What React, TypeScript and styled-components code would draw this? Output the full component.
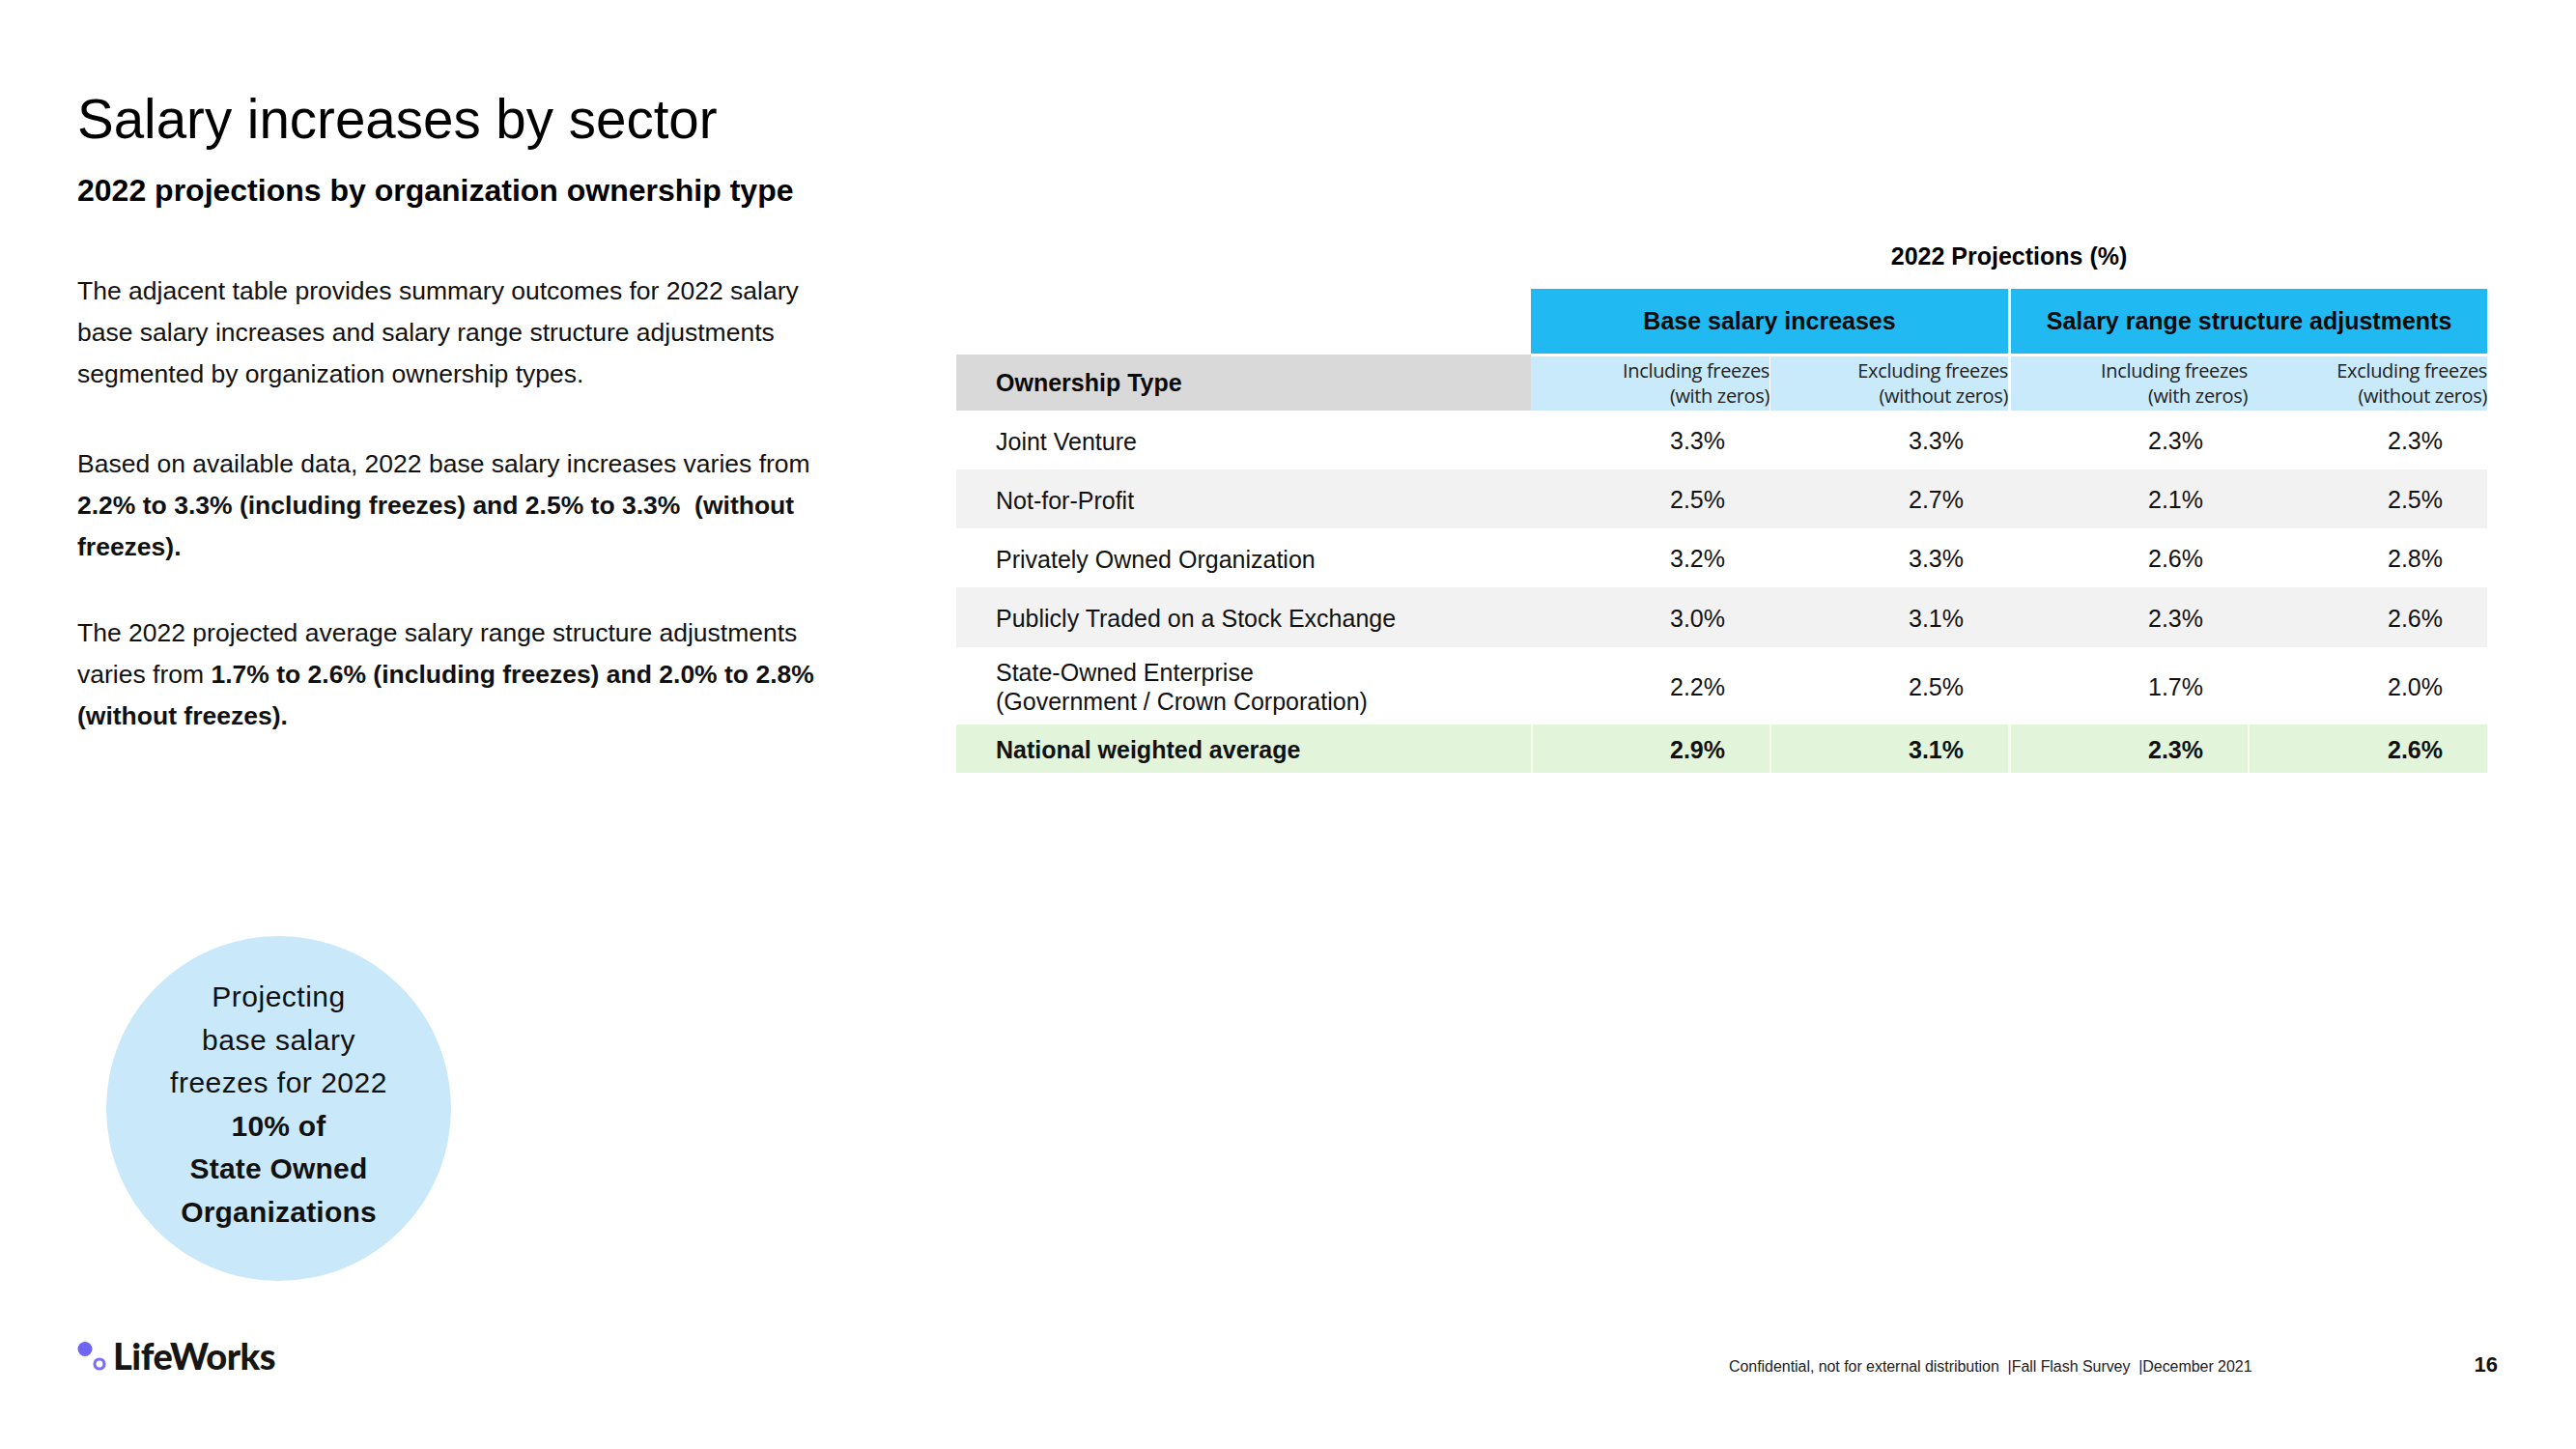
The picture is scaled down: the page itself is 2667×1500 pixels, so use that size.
import React from "react";
import styled, { createGlobalStyle } from "styled-components";

const GlobalStyle = createGlobalStyle`
  html, body {
    margin: 0;
    padding: 0;
    background: #ffffff;
  }
  body {
    font-family: "Liberation Sans", Arial, sans-serif;
    color: #000000;
  }
`;

type Tone = "white" | "stripe" | "total";

interface RowData {
  label: string[];
  values: string[];
  tone: Tone;
}

const rows: RowData[] = [
  {label: ["Joint Venture"], values: ["3.3%", "3.3%", "2.3%", "2.3%"], tone: "white"},
  {label: ["Not-for-Profit"], values: ["2.5%", "2.7%", "2.1%", "2.5%"], tone: "stripe"},
  {label: ["Privately Owned Organization"], values: ["3.2%", "3.3%", "2.6%", "2.8%"], tone: "white"},
  {label: ["Publicly Traded on a Stock Exchange"], values: ["3.0%", "3.1%", "2.3%", "2.6%"], tone: "stripe"},
  {
    label: ["State-Owned Enterprise", "(Government / Crown Corporation)"],
    values: ["2.2%", "2.5%", "1.7%", "2.0%"],
    tone: "white"
  },
  {label: ["National weighted average"], values: ["2.9%", "3.1%", "2.3%", "2.6%"], tone: "total"},
];

const subHeaders = [
  ["Including freezes", "(with zeros)"],
  ["Excluding freezes", "(without zeros)"],
  ["Including freezes", "(with zeros)"],
  ["Excluding freezes", "(without zeros)"],
];

const toneColor: Record<Tone, string> = {
  white: "#ffffff",
  stripe: "#f2f2f2",
  total: "#e2f4da",
};

const Slide = styled.div`
  width: 2667px;
  height: 1500px;
  box-sizing: border-box;
  padding: 90px 81px 74px 80px;
  display: flex;
  flex-direction: column;
  background: #ffffff;
  overflow: hidden;
`;

const Title = styled.h1`
  margin: 0;
  font-size: 56.5px;
  line-height: 67px;
  font-weight: 400;
  color: #000;
`;

const Subtitle = styled.h2`
  margin: 20px 0 0;
  font-size: 32px;
  line-height: 40px;
  font-weight: 700;
  color: #000;
`;

const Content = styled.div`
  display: grid;
  grid-template-columns: 910px 1585px;
  align-items: start;
`;

const TextColumn = styled.div`
  padding-top: 63px;
  display: flex;
  flex-direction: column;
  align-items: flex-start;
`;

const Paragraph = styled.p<{ $after?: number }>`
  margin: 0 0 ${p => p.$after ?? 0}px;
  font-size: 26.5px;
  line-height: 43px;
  color: #111;

  b {
    font-weight: 700;
  }
`;

const Bubble = styled.div`
  margin: 206px 0 0 30px;
  width: 357px;
  height: 357px;
  box-sizing: border-box;
  padding-bottom: 8px;
  border-radius: 50%;
  background: #c9e9fa;
  display: flex;
  flex-direction: column;
  align-items: center;
  justify-content: center;
  text-align: center;
  font-size: 30px;
  line-height: 44.5px;
  color: #111;
`;

const BubbleLine = styled.span<{ $bold?: boolean }>`
  font-weight: ${p => (p.$bold ? 700 : 400)};
  letter-spacing: ${p => (p.$bold ? "0.2px" : "0.5px")};
`;

const Table = styled.div`
  margin-top: 25px;
  display: grid;
  grid-template-columns: 595px 247px 247px 248px 248px;
  grid-template-rows: 57px 68px 58px 61px 61px 61px 62px 80px 50px;
`;

const Caption = styled.div`
  grid-column: 2 / 6;
  display: flex;
  align-items: flex-end;
  justify-content: center;
  padding-bottom: 19px;
  font-size: 25px;
  line-height: 30px;
  font-weight: 700;
`;

const Spacer = styled.div`
  grid-column: 1;
  grid-row: 2;
`;

const GroupHeader = styled.div<{ $second?: boolean }>`
  grid-column: ${p => (p.$second ? "4 / 6" : "2 / 4")};
  background: #21b9f1;
  border-left: ${p => (p.$second ? "3px solid #ffffff" : "none")};
  display: flex;
  align-items: center;
  justify-content: center;
  font-size: 25px;
  font-weight: 700;
  color: #0a0a0a;
  margin-bottom: 1px;
`;

const OwnerHead = styled.div`
  grid-column: 1;
  background: #d9d9d9;
  display: flex;
  align-items: center;
  padding-left: 41px;
  font-size: 25px;
  font-weight: 700;
  color: #0a0a0a;
`;

const SubHead = styled.div<{ $gap: number }>`
  background: #c8eafb;
  border-top: 2px solid #ffffff;
  border-left: ${p => (p.$gap ? `${p.$gap}px solid #ffffff` : "none")};
  display: flex;
  flex-direction: column;
  justify-content: center;
  align-items: flex-end;
  font-family: "Open Sans", "Noto Sans", sans-serif;
  font-size: 20px;
  line-height: 26px;
  letter-spacing: -0.35px;
  color: #222;
  white-space: nowrap;
`;

const LabelCell = styled.div<{ $tone: Tone }>`
  background: ${p => toneColor[p.$tone]};
  display: flex;
  flex-direction: column;
  justify-content: center;
  padding: 2px 0 0 41px;
  font-size: 25px;
  line-height: 30px;
  font-weight: ${p => (p.$tone === "total" ? 700 : 400)};
  color: #111;
`;

const ValueCell = styled.div<{ $tone: Tone; $gap: number }>`
  background: ${p => toneColor[p.$tone]};
  border-left: ${p =>
    p.$tone === "total"
      ? `${Math.max(p.$gap, 2)}px solid #f4fbf1`
      : p.$gap > 1
        ? `${p.$gap}px solid ${p.$tone === "stripe" ? "#f2f2f2" : "#ffffff"}`
        : "none"};
  display: flex;
  align-items: center;
  justify-content: flex-end;
  padding: 2px 46px 0 0;
  font-size: 25px;
  font-weight: ${p => (p.$tone === "total" ? 700 : 400)};
  color: #111;
`;

const Footer = styled.div`
  margin-top: auto;
  display: flex;
  align-items: baseline;
`;

const Logo = styled.div`
  display: flex;
  align-items: flex-end;
  gap: 7px;

  svg {
    margin-bottom: 6px;
    flex: none;
  }
`;

const LogoWord = styled.span`
  font-family: Lato, "Inter", sans-serif;
  font-weight: 900;
  font-size: 38px;
  line-height: 45px;
  letter-spacing: -0.5px;
  color: #161616;
`;

const Note = styled.span`
  margin-left: auto;
  font-size: 16px;
  letter-spacing: -0.05px;
  color: #222;
  white-space: pre;
`;

const PageNumber = styled.span`
  margin-left: 230px;
  font-size: 22px;
  font-weight: 700;
  color: #111;
`;

const colGap = [0, 1, 3, 0];

const App: React.FC = () => {
  return (
    <>
      <GlobalStyle/>
      <Slide>
        <Title>Salary increases by sector</Title>
        <Subtitle>2022 projections by organization ownership type</Subtitle>
        <Content>
          <TextColumn>
            <Paragraph $after={50}>
              The adjacent table provides summary outcomes for 2022 salary<br/>
              base salary increases and salary range structure adjustments<br/>
              segmented by organization ownership types.
            </Paragraph>
            <Paragraph $after={46}>
              Based on available data, 2022 base salary increases varies from<br/>
              <b>2.2% to 3.3% (including freezes) and 2.5% to 3.3%&nbsp; (without<br/>
              freezes).</b>
            </Paragraph>
            <Paragraph>
              The 2022 projected average salary range structure adjustments<br/>
              varies from <b>1.7% to 2.6% (including freezes) and 2.0% to 2.8%<br/>
              (without freezes).</b>
            </Paragraph>
            <Bubble>
              <BubbleLine>Projecting</BubbleLine>
              <BubbleLine>base salary</BubbleLine>
              <BubbleLine>freezes for 2022</BubbleLine>
              <BubbleLine $bold>10% of</BubbleLine>
              <BubbleLine $bold>State Owned</BubbleLine>
              <BubbleLine $bold>Organizations</BubbleLine>
            </Bubble>
          </TextColumn>

          <Table>
            <Caption>2022 Projections (%)</Caption>
            <Spacer/>
            <GroupHeader>Base salary increases</GroupHeader>
            <GroupHeader $second>Salary range structure adjustments</GroupHeader>
            <OwnerHead>Ownership Type</OwnerHead>
            {subHeaders.map((lines, i) => (
              <SubHead key={i} $gap={colGap[i]}>
                <span>{lines[0]}</span>
                <span>{lines[1]}</span>
              </SubHead>
            ))}
            {rows.map((row, r) => (
              <React.Fragment key={r}>
                <LabelCell $tone={row.tone}>
                  {row.label.map((l, i) => <span key={i}>{l}</span>)}
                </LabelCell>
                {row.values.map((v, i) => (
                  <ValueCell key={i} $tone={row.tone} $gap={i === 0 ? 0 : colGap[i] || 2}>{v}</ValueCell>
                ))}
              </React.Fragment>
            ))}
          </Table>
        </Content>

        <Footer>
          <Logo>
            <svg width="30" height="32" viewBox="0 0 30 32">
              <circle cx="8" cy="8.5" r="7.5" fill="#6f64f4"/>
              <circle cx="23" cy="24" r="5" fill="none" stroke="#7b6ff5" strokeWidth="3.2"/>
            </svg>
            <LogoWord>LifeWorks</LogoWord>
          </Logo>
          <Note>Confidential, not for external distribution  |Fall Flash Survey  |December 2021</Note>
          <PageNumber>16</PageNumber>
        </Footer>
      </Slide>
    </>
  );
};

export default App;
